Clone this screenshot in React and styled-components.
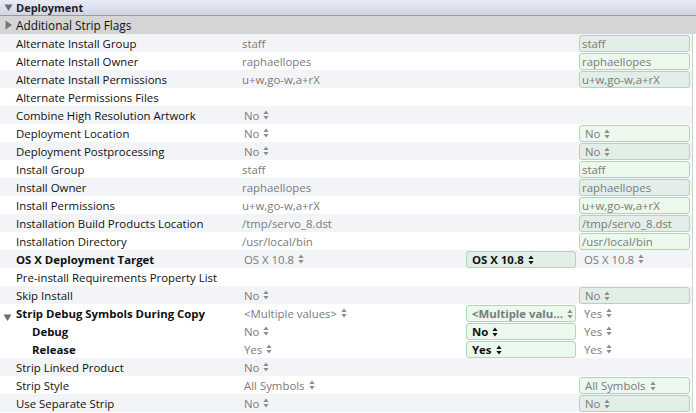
import React from 'react';
import styled, { createGlobalStyle } from 'styled-components';

const Global = createGlobalStyle`
  html, body {
    margin: 0;
    padding: 0;
    background: #ffffff;
  }
  body {
    font-family: "Open Sans", "DejaVu Sans", sans-serif;
    font-size: 11.4px;
    color: #1a1a1a;
    overflow: hidden;
  }
`

const PANE = styled.div`
  width: 696px;
  height: 413px;
  overflow: hidden;
  display: flex;
  flex-direction: column;
`
const SECTION = styled.div`
  height: 15px;
  border-bottom: 1px solid #9a9a9e;
  background: linear-gradient(#e9ebf4, #d0d4e4);
  display: flex;
  align-items: center;
  font-weight: 700;
  font-size: 11px;
  color: #1f1f1f;
  line-height: 15px;
`
const GROUP = styled.div`
  height: 18px;
  background: #d5d5d5;
  display: flex;
  align-items: center;
  font-size: 11.8px;
  color: #111;
`
const DISCLOSURE = styled.span`
  width: 16px;
  display: flex;
  justify-content: center;
  flex: none;
`
const ROW = styled.div`
  height: 18px;
  display: grid;
  grid-template-columns: 240px 224px 113px 115px 4px;
  align-items: center;
  background: ${p => (p.$shade ? '#f3f4f7' : '#ffffff')};
`
const LABEL = styled.div`
  display: flex;
  align-items: center;
  padding-left: ${p => (p.$indent ? 32 : 16)}px;
  font-weight: ${p => (p.$bold ? 700 : 400)};
  color: #111;
  white-space: nowrap;
  position: relative;
`
const TWISTY = styled.span`
  position: absolute;
  left: 3px;
  top: 4px;
`
const CELL = styled.div`
  display: flex;
  align-items: center;
  height: 18px;
  min-width: 0;
  padding-left: ${p => p.$pad || 0}px;
  color: #7b7b7b;
  white-space: nowrap;
`
const BOX = styled.div`
  box-sizing: border-box;
  height: 17px;
  margin: 1px 0 0 2px;
  width: ${p => p.$w}px;
  border: 1px solid #a9dbb3;
  border-radius: 3px;
  background: rgba(150, 210, 160, 0.18);
  display: flex;
  align-items: center;
  padding-left: ${p => (p.$popup ? 5 : 2)}px;
  padding-right: 4px;
  color: ${p => (p.$dark ? '#111' : '#7b7b7b')};
  font-weight: ${p => (p.$bold ? 700 : 400)};
  white-space: nowrap;
  overflow: hidden;
`
const VALUE = styled.span`
  flex: ${p => (p.$fill ? 1 : 'none')};
`
const EDGE = styled.div`
  height: 18px;
  border-left: 1px solid #d0d0d0;
  background: #ffffff;
`

function Stepper({ color }) {
  return (
    <svg width="6" height="10" viewBox="0 0 6 10" style={{ marginLeft: 4, flex: 'none' }}>
      <path d="M3 0.5 L5.6 4 L0.4 4 Z" fill={color} />
      <path d="M3 9.5 L5.6 6 L0.4 6 Z" fill={color} />
    </svg>
  )
}

function Popup({ text, dark, fill }) {
  return (
    <>
      <VALUE $fill={fill}>{text}</VALUE>
      <Stepper color={dark ? '#111' : '#8c8c8c'} />
    </>
  )
}

function Down() {
  return (
    <svg width="9" height="9" viewBox="0 0 9 9">
      <path d="M0.5 1.5 L8.5 1.5 L4.5 8 Z" fill="#6e6e6e" />
    </svg>
  )
}

function Right() {
  return (
    <svg width="9" height="10" viewBox="0 0 9 10">
      <path d="M1.5 0.5 L8 5 L1.5 9.5 Z" fill="#777" />
    </svg>
  )
}

// c2: value column, c3: target column, c4: project column
// kind 't' = text, 'p' = popup
const rows = [
  { label: 'Alternate Install Group', c2: ['t', 'staff'], c4: ['t', 'staff'] },
  { label: 'Alternate Install Owner', c2: ['t', 'raphaellopes'], c4: ['t', 'raphaellopes'] },
  { label: 'Alternate Install Permissions', c2: ['t', 'u+w,go-w,a+rX'], c4: ['t', 'u+w,go-w,a+rX'] },
  { label: 'Alternate Permissions Files' },
  { label: 'Combine High Resolution Artwork', c2: ['p', 'No'] },
  { label: 'Deployment Location', c2: ['p', 'No'], c4: ['p', 'No'] },
  { label: 'Deployment Postprocessing', c2: ['p', 'No'], c4: ['p', 'No'] },
  { label: 'Install Group', c2: ['t', 'staff'], c4: ['t', 'staff'] },
  { label: 'Install Owner', c2: ['t', 'raphaellopes'], c4: ['t', 'raphaellopes'] },
  { label: 'Install Permissions', c2: ['t', 'u+w,go-w,a+rX'], c4: ['t', 'u+w,go-w,a+rX'] },
  { label: 'Installation Build Products Location', c2: ['t', '/tmp/servo_8.dst'], c4: ['t', '/tmp/servo_8.dst'] },
  { label: 'Installation Directory', c2: ['t', '/usr/local/bin'], c4: ['t', '/usr/local/bin'] },
  { label: 'OS X Deployment Target', bold: true, c2: ['p', 'OS X 10.8'], c3: ['p', 'OS X 10.8', true], c4plain: 'OS X 10.8' },
  { label: 'Pre-install Requirements Property List' },
  { label: 'Skip Install', c2: ['p', 'No'], c4: ['p', 'No'] },
  { label: 'Strip Debug Symbols During Copy', bold: true, open: true, c2: ['p', '<Multiple values>'], c3: ['p', '<Multiple valu…', false, true], c4plain: 'Yes' },
  { label: 'Debug', bold: true, indent: true, white: true, c2: ['p', 'No'], c3: ['p', 'No', true], c4plain: 'Yes' },
  { label: 'Release', bold: true, indent: true, white: true, c2: ['p', 'Yes'], c3: ['p', 'Yes', true], c4plain: 'Yes' },
  { label: 'Strip Linked Product', c2: ['p', 'No'] },
  { label: 'Strip Style', c2: ['p', 'All Symbols'], c4: ['p', 'All Symbols'] },
  { label: 'Use Separate Strip', c2: ['p', 'No'], c4: ['p', 'No'] },
]

function Setting({ row, index }) {
  const shade = !row.white && index % 2 === 0
  return (
    <ROW $shade={shade}>
      <LABEL $bold={row.bold} $indent={row.indent}>
        {row.open && <TWISTY><Down /></TWISTY>}
        {row.label}
      </LABEL>
      <CELL $pad={row.c2 && row.c2[0] === 'p' ? 4 : 2}>
        {row.c2 && (row.c2[0] === 'p' ? <Popup text={row.c2[1]} /> : row.c2[1])}
      </CELL>
      <CELL>
        {row.c3 && (
          <BOX $w={110} $popup $bold $dark={row.c3[2]}>
            <Popup text={row.c3[1]} dark={row.c3[2]} fill={row.c3[3]} />
          </BOX>
        )}
      </CELL>
      <CELL $pad={row.c4plain ? 7 : 0}>
        {row.c4 && (
          <BOX $w={111} $popup={row.c4[0] === 'p'}>
            {row.c4[0] === 'p' ? <Popup text={row.c4[1]} /> : row.c4[1]}
          </BOX>
        )}
        {row.c4plain && <Popup text={row.c4plain} />}
      </CELL>
      <EDGE />
    </ROW>
  )
}

export default function App() {
  return (
    <PANE>
      <Global />
      <SECTION>
        <DISCLOSURE><Down /></DISCLOSURE>
        Deployment
      </SECTION>
      <GROUP>
        <DISCLOSURE><Right /></DISCLOSURE>
        Additional Strip Flags
      </GROUP>
      {rows.map((row, i) => (
        <Setting key={row.label} row={row} index={i} />
      ))}
    </PANE>
  )
}
